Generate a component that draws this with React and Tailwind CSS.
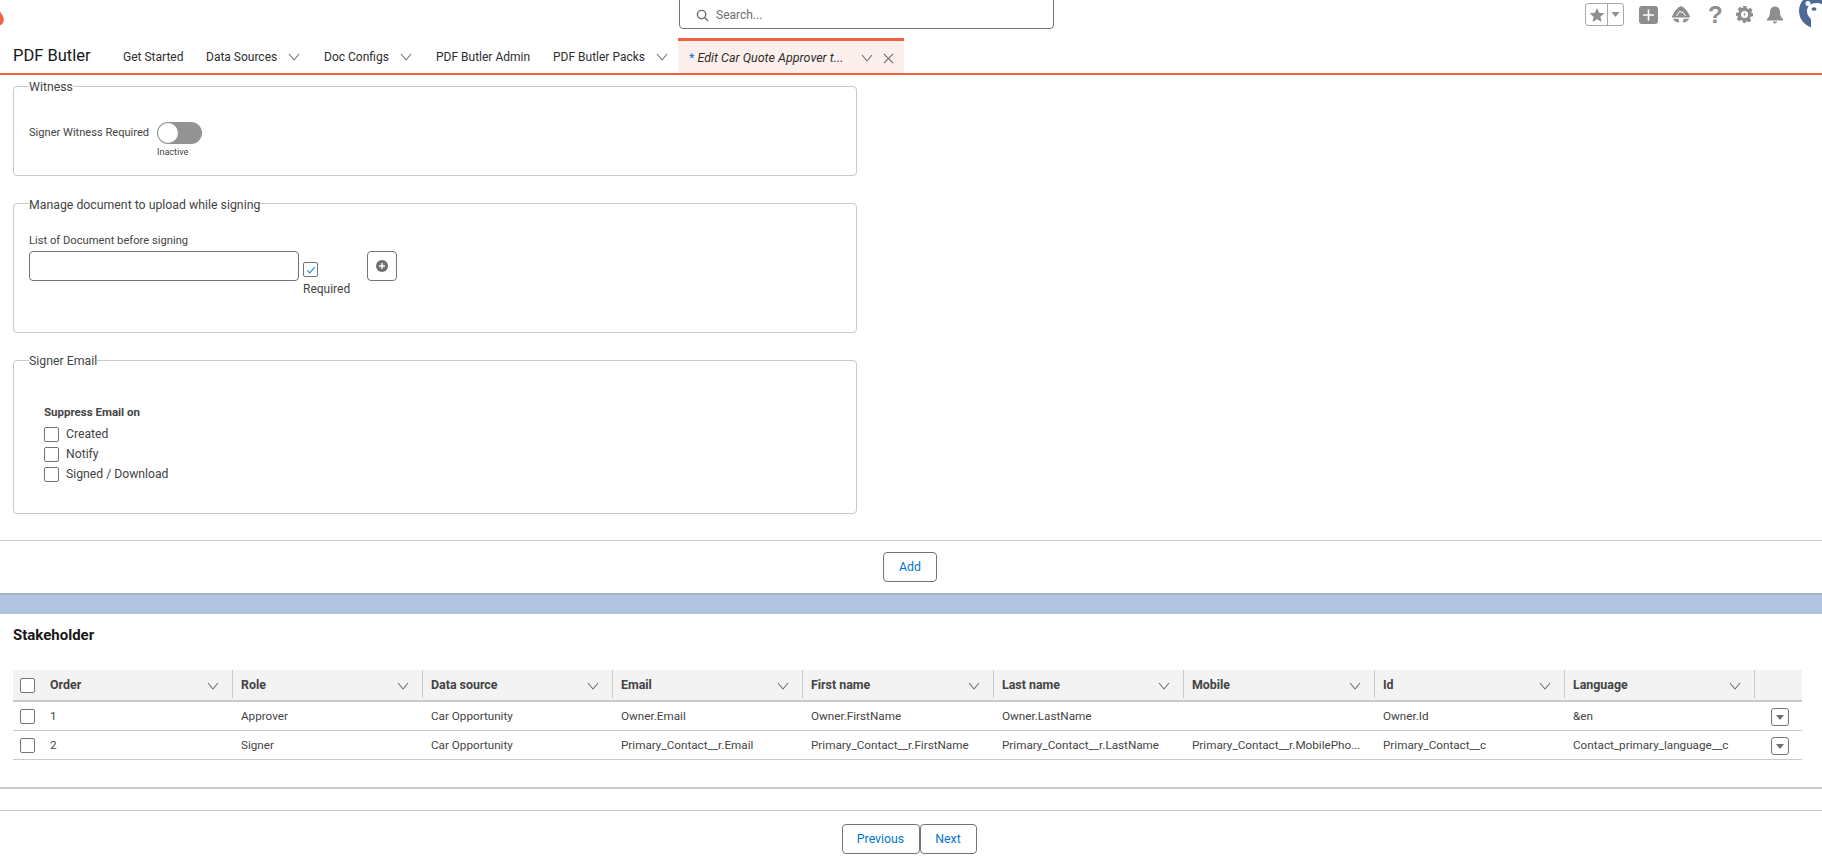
const Chevron = ({ className = "" }) => (
  <svg viewBox="0 0 12 8" className={`w-[12px] h-[8px] shrink-0 ${className}`} fill="none" stroke="#706e6b" strokeWidth="1.1">
    <path d="M1 1l5 6 5-6" />
  </svg>
);

const Box = () => <span className="block w-[15px] h-[15px] shrink-0 rounded-[2px] border border-[#747474] bg-white"></span>;

const navItems = [
  { label: "Get Started", width: "w-[83px]" },
  { label: "Data Sources", width: "w-[118px]", menu: true },
  { label: "Doc Configs", width: "w-[112px]", menu: true },
  { label: "PDF Butler Admin", width: "w-[117px]" },
  { label: "PDF Butler Packs", width: "w-[125px]", menu: true },
];

const columns = ["Order", "Role", "Data source", "Email", "First name", "Last name", "Mobile", "Id", "Language"];

const rows = [
  ["1", "Approver", "Car Opportunity", "Owner.Email", "Owner.FirstName", "Owner.LastName", "", "Owner.Id", "&en"],
  ["2", "Signer", "Car Opportunity", "Primary_Contact__r.Email", "Primary_Contact__r.FirstName", "Primary_Contact__r.LastName", "Primary_Contact__r.MobilePho...", "Primary_Contact__c", "Contact_primary_language__c"],
];

const gridCols = "grid grid-cols-[220px_190px_190px_190px_191px_190px_191px_190px_190px_47px]";

function TopIcons() {
  return (
    <div className="flex items-center h-[29px] justify-end text-[#8e8e8e]">
      <div className="flex w-[39px] h-[23px] rounded-[3px] border border-[#a8a8a8]">
        <div className="w-[22px] flex items-center justify-center border-r border-[#a8a8a8]">
          <svg viewBox="0 0 24 24" className="w-[16px] h-[16px]" fill="#8e8e8e"><path d="M12 1.500l3.200 7.200 7.800.8-5.900 5.200 1.700 7.700L12 18.400l-6.800 4 1.700-7.700L1 9.500l7.800-.8z" /></svg>
        </div>
        <div className="flex-1 flex items-center justify-center">
          <svg viewBox="0 0 8 5" className="w-[9px] h-[5px]" fill="#8e8e8e"><path d="M0 0h8L4 5z" /></svg>
        </div>
      </div>
      <svg viewBox="0 0 19 18" className="w-[19px] h-[18px] ml-[15px]">
        <rect width="19" height="18" rx="3" fill="#8e8e8e" />
        <path d="M9.500 3.500v11M4 9h11" stroke="#fff" strokeWidth="1.600" />
      </svg>
      <svg viewBox="0 0 18 18" className="w-[18px] h-[18px] ml-[14px]" fill="#8e8e8e">
        <path d="M9 0c3.800 1.600 7 5.500 9 10.500 .2 .8-.2 1-1 1H1c-.8 0-1.200-.2-1-1C2 5.500 5.200 1.600 9 0z" />
        <path d="M0.800 12.800h5.500l1 3.700C4.500 16.500 2 15.200 0.800 12.800zM11.700 12.800h5.500c-1.200 2.400-3.700 3.700-6.500 3.700z" />
        <path d="M4.500 10l3.500-5 1.500 2 1-1.200L13.500 10" fill="none" stroke="#fff" strokeWidth="1" />
      </svg>
      <span className="ml-[18px] w-[12px] text-[24px] leading-[24px] font-bold font-['Liberation_Sans',sans-serif]">?</span>
      <svg viewBox="0 0 24 24" className="w-[17px] h-[17px] ml-[16px]" fill="#8e8e8e">
        <path fillRule="evenodd" d="M9.500 0h5l.7 3.200 2.200.9 2.800-1.800 3.200 3.200-1.800 2.800.9 2.200L24 10v4.500l-3.400.7-.9 2.200 1.800 2.800-3.200 3.200-2.800-1.800-2.200.9L14 24h-4l-.7-3.200-2.200-.9-2.800 1.800-3.200-3.200 1.800-2.800-.9-2.200L0 14.500V10l3.400-.7.900-2.200-1.800-2.800 3.200-3.200 2.800 1.800 2.200-.9zM12 7a5 5 0 100 10 5 5 0 000-10z" />
        <path d="M12.800 8.500l-2.500 3.800h1.700l-.8 3.200 2.900-4.300h-1.800z" />
      </svg>
      <svg viewBox="0 0 18 18" className="w-[18px] h-[18px] ml-[13px]" fill="#8e8e8e">
        <path d="M9 0.500c3.200 0 5 2.400 5 5.500 0 3.500.8 5 3 7v1.500H1V13c2.200-2 3-3.500 3-7 0-3.100 1.800-5.500 5-5.500z" />
        <path d="M6.800 15.500h4.400c-.3 1.300-1.100 2-2.200 2s-1.900-.7-2.200-2z" />
      </svg>
      <svg viewBox="0 0 36 36" className="w-[36px] h-[36px] ml-[14px] -mr-[12px] self-start -mt-[5px] shrink-0">
        <circle cx="18" cy="16" r="17" fill="#4e6a94" />
        <circle cx="10" cy="8.500" r="2.500" fill="#fff" />
        <circle cx="27" cy="8.500" r="2.500" fill="#fff" />
        <path d="M9 16c0-5 4-8 9.500-8s9.500 3 9.500 8c0 4-2 5-3 7v10H13V24c-2-2-4-4-4-8z" fill="#fff" />
        <ellipse cx="16" cy="14" rx="2.500" ry="1.800" fill="#4e6a94" />
      </svg>
    </div>
  );
}

export default function App() {
  return (
    <div className="w-[1822px] h-[862px] overflow-hidden bg-white text-[#444444] font-['Roboto',sans-serif] text-[12px]">
      {/* header */}
      <div className="grid grid-cols-[679px_375px_1fr] h-[38px]">
        <div className="overflow-hidden">
          <svg viewBox="0 0 10 20" className="w-[8px] h-[15px] -ml-[4px] mt-[11px]" fill="#f0623e">
            <path d="M5 0c1 4 5 6 5 11 0 5-3 8-5 8s-5-3-5-8c0-5 4-7 5-11z" />
          </svg>
        </div>
        <div className="h-[30px] -mt-[1px] flex items-center pl-[16px] pt-[2px] border border-[#747474] rounded-b-[4px] text-[#706e6b]">
          <svg viewBox="0 0 14 14" className="w-[13px] h-[13px]" fill="none" stroke="#706e6b" strokeWidth="1.500">
            <circle cx="6" cy="6" r="4.500" />
            <path d="M9.500 9.500L13 13" />
          </svg>
          <span className="ml-[7px]">Search...</span>
        </div>
        <div className="flex justify-end h-[29px]">
          <div className="w-[237px]"><TopIcons /></div>
        </div>
      </div>

      {/* nav */}
      <div className="flex h-[37px] border-b-2 border-[#f0623e] pl-[13px]">
        <div className="w-[110px] text-[#181818] text-[16.500px] leading-[36px]">PDF Butler</div>
        {navItems.map((item) => (
          <div key={item.label} className={`${item.width} flex items-center h-[36px] pt-[2px] text-[#2e2e2e] text-[12px]`}>
            <span>{item.label}</span>
            {item.menu && <Chevron className="ml-[11px]" />}
          </div>
        ))}
        <div className="w-[226px] h-[35px] border-t-[3px] border-[#f0623e] bg-[#fdf0ec] flex items-center pl-[11px] pt-[2px] text-[12.500px] text-[#2e2e2e]">
          <span className="text-[#0176d3] mr-[3px]">*</span>
          <span className="italic w-[148px] truncate">Edit Car Quote Approver t...</span>
          <Chevron className="ml-[16px]" />
          <svg viewBox="0 0 12 12" className="w-[11px] h-[11px] ml-[10px]" stroke="#706e6b" strokeWidth="1.300"><path d="M1 1l10 10M11 1L1 11" /></svg>
        </div>
      </div>

      {/* form */}
      <div className="pl-[13px] w-[857px]">
        <fieldset className="mt-[3px] h-[98px] border border-[#c9c9c9] rounded-[4px] pl-[15px]">
          <legend className="h-[16px] leading-[18px] text-[12.300px]">Witness</legend>
          <div className="flex pt-[28px]">
            <span className="w-[128px] leading-[22px] text-[11.100px]">Signer Witness Required</span>
            <div>
              <div className="w-[45px] h-[22px] rounded-full bg-[#939393] p-[1px]">
                <div className="w-[20px] h-[20px] rounded-full bg-white"></div>
              </div>
              <div className="text-[9px] mt-[2px] leading-[12px]">Inactive</div>
            </div>
          </div>
        </fieldset>

        <fieldset className="mt-[19px] h-[138px] border border-[#c9c9c9] rounded-[4px] pl-[15px]">
          <legend className="h-[16px] leading-[20px] text-[12.300px]">Manage document to upload while signing</legend>
          <div className="pt-[22px] text-[11.200px] leading-[16px]">List of Document before signing</div>
          <div className="flex mt-[2px]">
            <div className="w-[270px] h-[30px] rounded-[4px] border border-[#747474]"></div>
            <div className="ml-[4px] pt-[11px] w-[64px]">
              <span className="flex items-center justify-center w-[15px] h-[15px] rounded-[2px] border border-[#747474]">
                <svg viewBox="0 0 12 12" className="w-[10px] h-[10px]" fill="none" stroke="#1589ee" strokeWidth="1.300"><path d="M1.500 6.500l3 3 6-7" /></svg>
              </span>
              <div className="mt-[4px] leading-[16px]">Required</div>
            </div>
            <button className="w-[30px] h-[30px] rounded-[4px] border border-[#747474] flex items-center justify-center">
              <svg viewBox="0 0 12 12" className="w-[12px] h-[12px]"><circle cx="6" cy="6" r="6" fill="#706e6b" /><path d="M6 3v6M3 6h6" stroke="#fff" strokeWidth="1.500" /></svg>
            </button>
          </div>
        </fieldset>

        <fieldset className="mt-[19px] h-[162px] border border-[#c9c9c9] rounded-[4px] pl-[30px]">
          <legend className="-ml-[15px] h-[16px] leading-[18px] text-[12.300px]">Signer Email</legend>
          <div className="pt-[36px] font-bold text-[11.500px] leading-[16px]">Suppress Email on</div>
          <div className="flex flex-col gap-[5px] mt-[7px] text-[12.200px] leading-[15px]">
            <label className="flex gap-[7px]"><Box />Created</label>
            <label className="flex gap-[7px]"><Box />Notify</label>
            <label className="flex gap-[7px]"><Box />Signed / Download</label>
          </div>
        </fieldset>
      </div>

      <div className="mt-[26px] h-[53px] border-t border-[#c9c9c9] flex justify-center pt-[11px] pr-[2px]">
        <button className="w-[54px] h-[30px] pt-[1px] rounded-[4px] border border-[#747474] text-[#0176d3] text-[12.300px]">Add</button>
      </div>
      <div className="h-[21px] bg-[#b0c4df] border-t-2 border-[#a3b3c9]"></div>

      {/* stakeholder table */}
      <div className="pl-[13px] pr-[20px]">
        <h2 className="mt-[12px] h-[18px] leading-[18px] font-bold text-[15px] text-[#181818]">Stakeholder</h2>
        <div className={`${gridCols} mt-[26px] h-[32px] bg-[#f3f3f3] border-b-2 border-[#c9c9c9] font-bold text-[12.400px]`}>
          {columns.map((col, i) => (
            <div key={col} className={`flex items-center justify-between pt-[3px] pr-[13px] border-r border-[#c9c9c9] mb-[2px] ${i === 0 ? "pl-[7px]" : "pl-[8px]"}`}>
              <span className="flex items-center gap-[15px]">
                {i === 0 && <Box />}
                {col}
              </span>
              <Chevron />
            </div>
          ))}
          <div></div>
        </div>
        {rows.map((row) => (
          <div key={row[0]} className={`${gridCols} h-[29px] pt-[2px] border-b border-[#c9c9c9] items-center text-[11.700px]`}>
            {row.map((cell, i) => (
              <div key={i} className={`truncate ${i === 0 ? "flex items-center gap-[15px] pl-[7px]" : "pl-[8px] pr-[8px]"}`}>
                {i === 0 && <Box />}
                {cell}
              </div>
            ))}
            <div className="pl-[16px]">
              <button className="w-[18px] h-[18px] rounded-[3px] border border-[#747474] flex items-center justify-center">
                <svg viewBox="0 0 8 5" className="w-[8px] h-[5px]" fill="#706e6b"><path d="M0 0h8L4 5z" /></svg>
              </button>
            </div>
          </div>
        ))}
      </div>

      <div className="mt-[27px] h-[2px] bg-[#c9c9c9]"></div>
      <div className="mt-[21px] border-t border-[#c9c9c9] flex justify-center pt-[13px] pr-[4px]">
        <button className="w-[78px] h-[30px] rounded-[4px] border border-[#747474] text-[#0176d3] text-[12.300px]">Previous</button>
        <button className="w-[57px] h-[30px] rounded-[4px] border border-[#747474] text-[#0176d3] text-[12.300px]">Next</button>
      </div>
    </div>
  );
}
